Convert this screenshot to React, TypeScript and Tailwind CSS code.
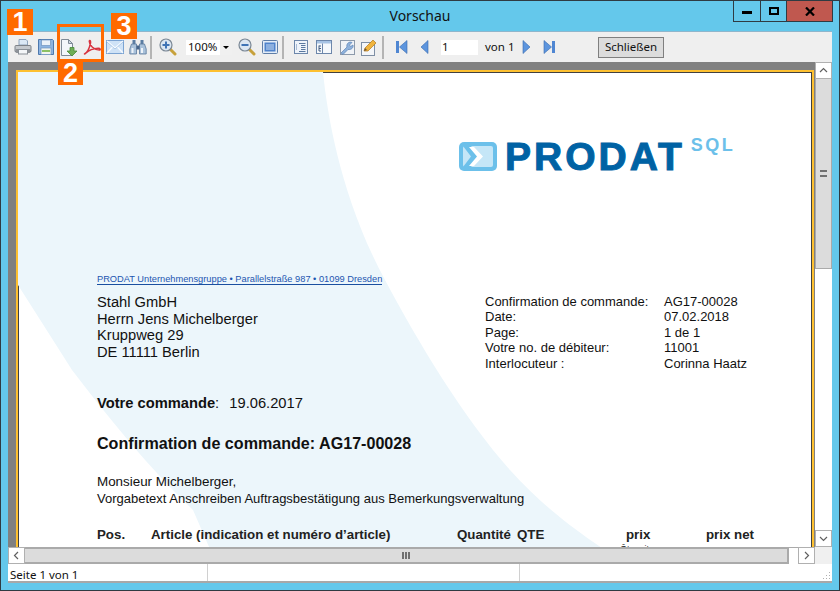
import React from 'react';

const PrinterIcon = () => (
  <svg width="18" height="18" viewBox="0 0 18 18">
    <path d="M5 1.500h7l1.500 1.500v4h-8.500z" fill="#dbe8f5" stroke="#8fa3bb" />
    <path d="M2 7.500h14a1 1 0 0 1 1 1v5H1v-5a1 1 0 0 1 1-1z" fill="#c4c8cd" stroke="#7d8288" />
    <rect x="1.500" y="11" width="15" height="4" rx="1" fill="#8d9298" />
    <rect x="4.500" y="11.500" width="9" height="4.500" fill="#f4f6f8" stroke="#8a9097" />
  </svg>
);

const SaveIcon = () => (
  <svg width="18" height="18" viewBox="0 0 18 18">
    <path d="M1.500 1.500h14l1 1v14h-15z" fill="#8db4e2" stroke="#4d78ad" />
    <rect x="4.500" y="2" width="9" height="5.500" fill="#eaf1f9" stroke="#6f93bf" strokeWidth=".7" />
    <rect x="4" y="10" width="10" height="6.500" fill="#f2f5ee" stroke="#6f93bf" strokeWidth=".7" />
    <rect x="5" y="12" width="8" height="2" fill="#8cc063" />
  </svg>
);

const ExportIcon = () => (
  <svg width="18" height="19" viewBox="0 0 18 19">
    <path d="M1.500 1.500h7l4 4v12h-11z" fill="#f3f6fa" stroke="#7f8a96" />
    <path d="M8.500 1.500v4h4z" fill="#cfd8e2" stroke="#7f8a96" />
    <path d="M10 9.500h4v3.500h3l-5 5-5-5h3z" fill="#6fae55" stroke="#4a8a38" strokeWidth=".8" />
  </svg>
);

const PdfIcon = () => (
  <svg width="18" height="18" viewBox="0 0 18 18" fill="none">
    <path d="M1.500 16c3-1.500 5-6 6-11 .4-2.500-1.200-3.500-1.200-1.500 0 4 5 8.500 10 8.500 1.500 0 1-1.800-1-1.700C11 10.500 6 12 3 15c-1 1-1.500 1-1.500 1z" stroke="#d8323e" strokeWidth="1.500" strokeLinejoin="round" />
  </svg>
);

const MailIcon = () => (
  <svg width="18" height="14" viewBox="0 0 18 14">
    <rect x=".5" y=".5" width="17" height="13" fill="#cfe2f6" stroke="#7ba3d2" />
    <path d="M1 1l8 7 8-7M1 13l6-6.500M17 13l-6-6.500" fill="none" stroke="#f8fbff" strokeWidth="1.200" />
    <path d="M1 2l8 7 8-7" fill="none" stroke="#8fb3dc" strokeWidth=".6" />
  </svg>
);

const BinocularsIcon = () => (
  <svg width="18" height="16" viewBox="0 0 18 16">
    <path d="M3.500 1h3v4h-3zM11.500 1h3v4h-3z" fill="#5b7da3" />
    <path d="M2.500 5h5v10H.8v-5zM15.500 5h-5v10h6.700v-5z" fill="#a9c1da" stroke="#5a789c" strokeWidth=".8" />
    <rect x="7.500" y="6.500" width="3" height="4" fill="#47658a" />
    <rect x="2.500" y="9" width="2" height="5" fill="#eef3f9" />
    <rect x="12" y="9" width="2" height="5" fill="#eef3f9" />
  </svg>
);

const ZoomIcon = ({ plus }: { plus?: boolean }) => (
  <svg width="18" height="18" viewBox="0 0 18 18">
    <path d="M11 11l5 5" stroke="#c7a13b" strokeWidth="3" strokeLinecap="round" />
    <circle cx="7" cy="7" r="6" fill="#dbe6f2" stroke="#7a8795" strokeWidth="1.200" />
    <rect x="3.500" y="6" width="7" height="2" fill="#3f73b5" />
    {plus && <rect x="6" y="3.500" width="2" height="7" fill="#3f73b5" />}
  </svg>
);

const FitIcon = () => (
  <svg width="16" height="16" viewBox="0 0 16 16">
    <rect x=".5" y="1.500" width="15" height="13" rx="1" fill="#e3ecf7" stroke="#5f7ea8" />
    <rect x="2.500" y="3.500" width="11" height="9" fill="#4f82cb" />
    <path d="M4 6h8M4 8h8M4 10h8" stroke="#c9dcf3" />
  </svg>
);

const OutlineIcon = () => (
  <svg width="14" height="14" viewBox="0 0 14 14">
    <rect x=".5" y=".5" width="13" height="13" fill="#eef3fa" stroke="#6d87ab" />
    <path d="M5 3.500h6.500M7 5.500h4.500M7 7.500h4.500M7 9.500h4.500M5 11.500h6.500" stroke="#5a789f" />
    <path d="M2.500 4v6" stroke="#a9bbd3" />
  </svg>
);

const PanelIcon = () => (
  <svg width="16" height="14" viewBox="0 0 16 14">
    <rect x=".5" y=".5" width="15" height="13" fill="#f6f9fc" stroke="#6d87ab" />
    <rect x="1" y="1" width="14" height="2.500" fill="#a7c3e4" />
    <path d="M6.500 3.500V13.500" stroke="#6d87ab" />
    <path d="M3 5.500v5.500M3 6h2M3 8.500h2M3 11h2" stroke="#465f82" />
  </svg>
);

const WrenchIcon = () => (
  <svg width="16" height="16" viewBox="0 0 16 16">
    <rect x="1.500" y="1.500" width="14" height="14" fill="#f0f3f7" stroke="#8d9aab" />
    <path d="M2 14l6-6c-1-3 2-6 5-4.500L10.500 6l1 1.500L14 6c.8 3-2 5-5 4.500L4 15.500z" fill="#8fb2dc" stroke="#5d84b6" strokeWidth=".7" />
  </svg>
);

const PencilIcon = () => (
  <svg width="17" height="17" viewBox="0 0 17 17">
    <rect x=".5" y="3.500" width="13" height="13" fill="#f4f6f9" stroke="#7f8fa5" />
    <path d="M3 12l1-3 8-8 3 3-8 8z" fill="#f0b43e" stroke="#b57a1c" strokeWidth=".7" />
    <path d="M3 12l1-3 2 2z" fill="#6a5636" />
  </svg>
);

const NavIcon = ({ dir, bar }: { dir: 'left' | 'right'; bar?: boolean }) => (
  <svg width="12" height="14" viewBox="0 0 12 14" className={dir === 'right' ? 'scale-x-[-1]' : ''}>
    {bar && <rect x="0" y="1" width="3" height="12" fill="#4f86d2" />}
    <path d={bar ? 'M11 .5V13.500L3.500 7z' : 'M9 .5V13.500L2 7z'} fill="#5d95de" stroke="#3869ad" strokeWidth=".6" />
  </svg>
);

const ToolButton = ({ children }: { children: React.ReactNode }) => (
  <div className="flex h-full w-[23px] shrink-0 items-center justify-center">{children}</div>
);

const Separator = () => <div className="mx-[1px] h-[23px] w-[2px] shrink-0 bg-[#b4b4b4]" />;

const Chevron = ({ d }: { d: string }) => (
  <svg width="9" height="9" viewBox="0 0 9 9" fill="none">
    <path d={d} stroke="#606060" strokeWidth="1.200" />
  </svg>
);

const addressRows = [
  ['Confirmation de commande:', 'AG17-00028'],
  ['Date:', '07.02.2018'],
  ['Page:', '1 de 1'],
  ['Votre no. de débiteur:', '11001'],
  ['Interlocuteur :', 'Corinna Haatz'],
];

const Page = () => (
  <div className="relative h-[1122px] w-[794px] shrink-0 border border-[#404040] bg-white font-['Liberation_Sans',sans-serif] text-[#111]">
    {/* background swoosh of the letterhead */}
    <svg className="absolute -left-px -top-px" width="793" height="560" viewBox="0 0 793 560">
      <path d="M0 0H305C310 50 325 130 367 208C400 270 445 345 492 398C525 435 560 460 590 480L700 560H228L175 438C130 395 90 345 54 298L0 213z" fill="#ecf6fb" />
    </svg>
    <div className="relative -ml-px -mt-px pt-[66px]">
      <div className="ml-[441px] flex h-[34px] items-start">
        <svg className="mt-[4px]" width="38" height="29" viewBox="0 0 38 29">
          <rect width="38" height="29" rx="5" fill="#6cc0ea" />
          <rect x="4" y="4" width="30" height="21" rx="2" fill="#c5e6f7" />
          <path d="M4 4h8l9 10.500L12 25H4l8-10.500z" fill="#6cc0ea" />
          <path d="M10 5h5l9 9.500L15 24h-5l8-9.500z" fill="#ffffff" />
        </svg>
        <span className="ml-[8px] mt-[-1px] text-[39px] font-bold leading-[40px] tracking-[3px] text-[#0062a4] [-webkit-text-stroke:1px_#0062a4]">
          PRODAT
        </span>
        <span className="ml-[6px] mt-[-3px] text-[18px] font-bold leading-[20px] tracking-[2.500px] text-[#6cc0ea]">SQL</span>
      </div>

      <div className="ml-[79px] mt-[102px] w-fit border-b border-[#1a4fa0] text-[9.270px] leading-[10px] text-[#1c55b0]">
        PRODAT Unternehmensgruppe • Parallelstraße 987 • 01099 Dresden
      </div>

      <div className="mt-[7px] flex">
        <div className="ml-[79px] w-[388px] pt-[2px] text-[14.700px] leading-[16.700px]">
          <div>Stahl GmbH</div>
          <div>Herrn Jens Michelberger</div>
          <div>Kruppweg 29</div>
          <div>DE 11111 Berlin</div>
        </div>
        <div className="pt-[1.500px] text-[13px] leading-[15.600px]">
          {addressRows.map(([label, value]) => (
            <div key={label} className="flex">
              <div className="w-[179px]">{label}</div>
              <div>{value}</div>
            </div>
          ))}
        </div>
      </div>

      <div className="ml-[79px] mt-[24px] text-[14.700px] leading-[16px]">
        <strong>Votre commande</strong>:&nbsp;&nbsp;<span className="ml-[2px]">19.06.2017</span>
      </div>
      <div className="ml-[79px] mt-[22px] text-[16.100px] font-bold leading-[20px]">Confirmation de commande: AG17-00028</div>
      <div className="ml-[79px] mt-[20px] text-[13.400px] leading-[17px]">Monsieur Michelberger,</div>
      <div className="ml-[79px] text-[13px] leading-[17px]">
        Vorgabetext Anschreiben Auftragsbestätigung aus Bemerkungsverwaltung
      </div>

      <div className="mt-[20px] flex text-[13.300px] font-bold leading-[16px] text-[#222]">
        <div className="ml-[79px] w-[54px]">Pos.</div>
        <div className="w-[306px]">Article (indication et numéro d’article)</div>
        <div className="w-[60px]">Quantité</div>
        <div className="w-[109px]">QTE</div>
        <div className="w-[80px]">prix</div>
        <div>prix net</div>
      </div>
      <div className="ml-[602px] mt-[1px] text-[9px] leading-[10px] text-[#222]">Ôt. unit.</div>
    </div>
  </div>
);

export default function App() {
  return (
    <div className="relative flex h-[591px] w-[840px] flex-col overflow-hidden border border-[#2f3b42] bg-[#64c8eb] font-['Noto_Sans',sans-serif] text-[#111]">
      <div className="relative flex h-[30px] shrink-0 items-center justify-center pb-[1px] text-[14px]">
        Vorschau
        <div className="absolute right-[6px] top-[-1px] flex h-[22px] border border-[#2f3b42]">
          <div className="flex w-[27px] items-center justify-center border-r border-[#2f3b42] pt-[3px]">
            <div className="h-[3px] w-[10px] bg-black" />
          </div>
          <div className="flex w-[26px] items-center justify-center border-r border-[#2f3b42]">
            <div className="h-[8px] w-[10px] border-2 border-black" />
          </div>
          <div className="flex w-[45px] items-center justify-center bg-[#c0584f]">
            <svg width="10" height="9" viewBox="0 0 10 9">
              <path d="M1 .5l8 8M9 .5l-8 8" stroke="#000" strokeWidth="2.200" />
            </svg>
          </div>
        </div>
      </div>

      <div className="mx-[7px] mb-[7px] flex min-h-0 flex-1 flex-col">
        {/* toolbar */}
        <div className="flex h-[31px] shrink-0 items-center border-t border-[#8fb6cc] bg-[#efefef] pl-[3px] text-[11px]">
          <ToolButton><PrinterIcon /></ToolButton>
          <ToolButton><SaveIcon /></ToolButton>
          <ToolButton><ExportIcon /></ToolButton>
          <ToolButton><PdfIcon /></ToolButton>
          <ToolButton><MailIcon /></ToolButton>
          <ToolButton><BinocularsIcon /></ToolButton>
          <Separator />
          <div className="ml-[3px]" />
          <ToolButton><ZoomIcon plus /></ToolButton>
          <div className="ml-[7px] flex h-[15px] w-[46px] items-center bg-white pl-[2px] text-[11.500px]">
            <span className="flex-1">100%</span>
            <span className="flex h-full w-[12px] items-center justify-center bg-[#f0f0f0]">
              <span className="h-0 w-0 border-x-[3px] border-t-[3px] border-x-transparent border-t-black" />
            </span>
          </div>
          <div className="ml-[3px]" />
          <ToolButton><ZoomIcon /></ToolButton>
          <ToolButton><FitIcon /></ToolButton>
          <Separator />
          <div className="ml-[4px]" />
          <ToolButton><OutlineIcon /></ToolButton>
          <ToolButton><PanelIcon /></ToolButton>
          <ToolButton><WrenchIcon /></ToolButton>
          <ToolButton><PencilIcon /></ToolButton>
          <Separator />
          <div className="ml-[5px]" />
          <ToolButton><NavIcon dir="left" bar /></ToolButton>
          <ToolButton><NavIcon dir="left" /></ToolButton>
          <div className="ml-[5px] flex h-[15px] w-[37px] items-center bg-white pl-[1px] text-[11.500px]">1</div>
          <span className="ml-[7px] w-[29px] whitespace-nowrap text-[11.500px]">von 1</span>
          <ToolButton><NavIcon dir="right" /></ToolButton>
          <ToolButton><NavIcon dir="right" bar /></ToolButton>
          <div className="ml-[38px] flex h-[21px] w-[66px] items-center justify-center border border-[#7f7f7f] bg-[#dcdcdc] text-[11.500px]">
            Schließen
          </div>
        </div>

        {/* preview + vertical scrollbar */}
        <div className="flex min-h-0 flex-1">
          <div className="min-w-0 flex-1 overflow-hidden bg-[#808080] pl-[8px] pt-[8px]">
            <div className="w-fit border-2 border-[#fdc030]">
              <Page />
            </div>
          </div>
          <div className="flex w-[17px] shrink-0 flex-col bg-[#f0f0f0]">
            <div className="flex h-[17px] items-center justify-center border border-[#b0b0b0] bg-white">
              <Chevron d="M1 6l3.500-3.500L8 6" />
            </div>
            <div className="flex h-[190px] items-center justify-center border-x border-b border-[#aaaaaa] bg-[#dcdcdc]">
              <div className="h-[7px] w-[7px] border-y-[2px] border-[#707070] bg-[#707070] bg-clip-content py-[1.500px]" />
            </div>
            <div className="flex-1 bg-white" />
            <div className="flex h-[17px] items-center justify-center border border-[#b0b0b0] bg-white">
              <Chevron d="M1 3l3.500 3.500L8 3" />
            </div>
          </div>
        </div>

        {/* horizontal scrollbar */}
        <div className="flex h-[17px] shrink-0 bg-[#f0f0f0]">
          <div className="flex w-[17px] items-center justify-center border border-[#b0b0b0] bg-white">
            <Chevron d="M6 1L2.500 4.500 6 8" />
          </div>
          <div className="flex w-[764px] items-center justify-center border-y-2 border-r-2 border-[#aaaaaa] bg-[#dcdcdc]">
            <div className="flex gap-[1px]">
              <div className="h-[7px] w-[2px] bg-[#707070]" />
              <div className="h-[7px] w-[2px] bg-[#707070]" />
              <div className="h-[7px] w-[2px] bg-[#707070]" />
            </div>
          </div>
          <div className="w-[9px] border-t border-[#aaaaaa] bg-white" />
          <div className="flex w-[17px] items-center justify-center border border-[#b0b0b0] bg-white">
            <Chevron d="M3 1l3.500 3.500L3 8" />
          </div>
        </div>

        {/* status bar */}
        <div className="relative flex h-[19px] shrink-0 items-center border-b-2 border-[#a8a8a8] bg-white text-[11.500px] leading-[16px]">
          <div className="h-full w-[200px] border-r border-[#d0d0d0] pl-[2px] pt-[3px]">Seite 1 von 1</div>
          <div className="h-full w-[312px] border-r border-[#d0d0d0]" />
          <svg className="absolute bottom-[1px] right-[1px]" width="8" height="8" viewBox="0 0 8 8">
            <path d="M6 0h1v1H6zM3 3h1v1H3zM6 3h1v1H6zM0 6h1v1H0zM3 6h1v1H3zM6 6h1v1H6z" fill="#b0b0b0" />
          </svg>
        </div>
      </div>

      {/* orange callouts laid over the toolbar */}
      <div className="absolute left-[56px] top-[23px] h-[38px] w-[47px] border-[3px] border-[#ff6a00]" />
      <Callout className="left-[6px] top-[8px] h-[26px] w-[26px]">1</Callout>
      <Callout className="left-[57px] top-[60px] h-[24px] w-[25px]">2</Callout>
      <Callout className="left-[110px] top-[12px] h-[26px] w-[26px]">3</Callout>
    </div>
  );
}

function Callout({ className, children }: { className: string; children: React.ReactNode }) {
  return (
    <div className={`absolute flex items-center justify-center bg-[#ff6a00] font-['Liberation_Sans',sans-serif] text-[27px] font-bold leading-none text-white ${className}`}>
      {children}
    </div>
  );
}
